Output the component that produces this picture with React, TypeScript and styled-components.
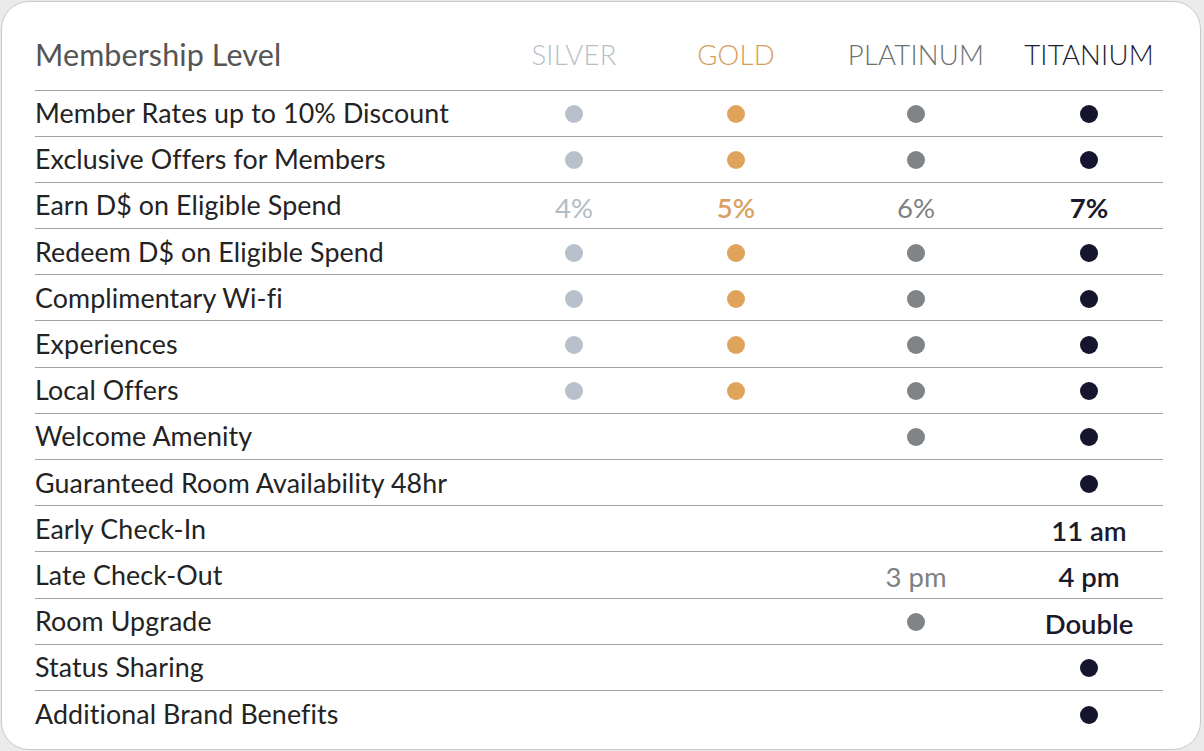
import React from "react";
import styled, { createGlobalStyle } from "styled-components";

const Global = createGlobalStyle`
  html, body { margin: 0; padding: 0; background: #ebebeb; }
  body { font-family: Lato, "Open Sans", sans-serif; }
`;

type Tier = "silver" | "gold" | "platinum" | "titanium";

const tierColor: Record<Tier, string> = {
  silver: "#b8c1cb",
  gold: "#e0a35c",
  platinum: "#808487",
  titanium: "#15152e",
};

const headColor: Record<Tier, string> = {
  silver: "#b5bfc9",
  gold: "#d49d5e",
  platinum: "#6c7174",
  titanium: "#1b1b31",
};

const valueColor: Record<Tier, string> = {
  silver: "#b3bcc5",
  gold: "#d9a062",
  platinum: "#7d8184",
  titanium: "#1a1a2c",
};

const Card = styled.div`
  box-sizing: border-box;
  width: 1200px;
  height: 749px;
  margin: 1px 0 0 1px;
  background: #fff;
  border: 1.5px solid #c9c9c9;
  border-radius: 28px;
  padding: 0 38px 0 33px;
`;

const Table = styled.div`
  display: grid;
  grid-template-columns: 458px 162px 162px 198px 148px;
`;

const Row = styled.div<{ $last?: boolean; $head?: boolean }>`
  display: contents;
  & > div {
    height: ${(p) => (p.$head ? "88.5px" : "46.2px")};
    border-bottom: ${(p) => (p.$last ? "none" : "1.6px solid #a3a3a3")};
  }
`;

const Label = styled.div<{ $head?: boolean }>`
  display: flex;
  align-items: center;
  padding-top: ${(p) => (p.$head ? "17px" : "0")};
  box-sizing: border-box;
  font-size: ${(p) => (p.$head ? "30.5px" : "26.8px")};
  color: ${(p) => (p.$head ? "#555" : "#232323")};
  font-weight: 400;
  white-space: nowrap;
  letter-spacing: 0.1px;
`;

const Cell = styled.div<{ $head?: boolean }>`
  display: flex;
  align-items: center;
  justify-content: center;
  box-sizing: border-box;
  padding-top: ${(p) => (p.$head ? "17px" : "0")};
`;

const TierName = styled.span<{ $tier: Tier }>`
  font-size: 27.5px;
  font-weight: 300;
  color: ${(p) => headColor[p.$tier]};
  letter-spacing: 0.2px;
`;

const Dot = styled.span<{ $tier: Tier }>`
  width: 18px;
  height: 18px;
  border-radius: 50%;
  background: ${(p) => tierColor[p.$tier]};
  margin-top: 2px;
`;

const Value = styled.span<{ $tier: Tier; $weight?: number }>`
  font-size: 27.5px;
  font-weight: ${(p) => p.$weight ?? 700};
  color: ${(p) => valueColor[p.$tier]};
  margin-top: 4px;
`;

type CellVal = null | "dot" | { text: string; weight?: number };

const tiers: Tier[] = ["silver", "gold", "platinum", "titanium"];

const rows: { label: string; cells: CellVal[] }[] = [
  { label: "Member Rates up to 10% Discount", cells: ["dot", "dot", "dot", "dot"] },
  { label: "Exclusive Offers for Members", cells: ["dot", "dot", "dot", "dot"] },
  {
    label: "Earn D$ on Eligible Spend",
    cells: [
      { text: "4%", weight: 400 },
      { text: "5%", weight: 600 },
      { text: "6%", weight: 400 },
      { text: "7%", weight: 700 },
    ],
  },
  { label: "Redeem D$ on Eligible Spend", cells: ["dot", "dot", "dot", "dot"] },
  { label: "Complimentary Wi-fi", cells: ["dot", "dot", "dot", "dot"] },
  { label: "Experiences", cells: ["dot", "dot", "dot", "dot"] },
  { label: "Local Offers", cells: ["dot", "dot", "dot", "dot"] },
  { label: "Welcome Amenity", cells: [null, null, "dot", "dot"] },
  { label: "Guaranteed Room Availability 48hr", cells: [null, null, null, "dot"] },
  { label: "Early Check-In", cells: [null, null, null, { text: "11 am", weight: 600 }] },
  {
    label: "Late Check-Out",
    cells: [null, null, { text: "3 pm", weight: 400 }, { text: "4 pm", weight: 600 }],
  },
  { label: "Room Upgrade", cells: [null, null, "dot", { text: "Double", weight: 600 }] },
  { label: "Status Sharing", cells: [null, null, null, "dot"] },
  { label: "Additional Brand Benefits", cells: [null, null, null, "dot"] },
];

export default function App() {
  return (
    <>
      <Global />
      <Card>
        <Table>
          <Row $head>
            <Label $head>Membership Level</Label>
            {tiers.map((t) => (
              <Cell $head key={t}>
                <TierName $tier={t}>{t.toUpperCase()}</TierName>
              </Cell>
            ))}
          </Row>
          {rows.map((r, i) => (
            <Row key={r.label} $last={i === rows.length - 1}>
              <Label>{r.label}</Label>
              {r.cells.map((c, j) => (
                <Cell key={j}>
                  {c === "dot" ? (
                    <Dot $tier={tiers[j]} />
                  ) : c ? (
                    <Value $tier={tiers[j]} $weight={c.weight}>
                      {c.text}
                    </Value>
                  ) : null}
                </Cell>
              ))}
            </Row>
          ))}
        </Table>
      </Card>
    </>
  );
}
